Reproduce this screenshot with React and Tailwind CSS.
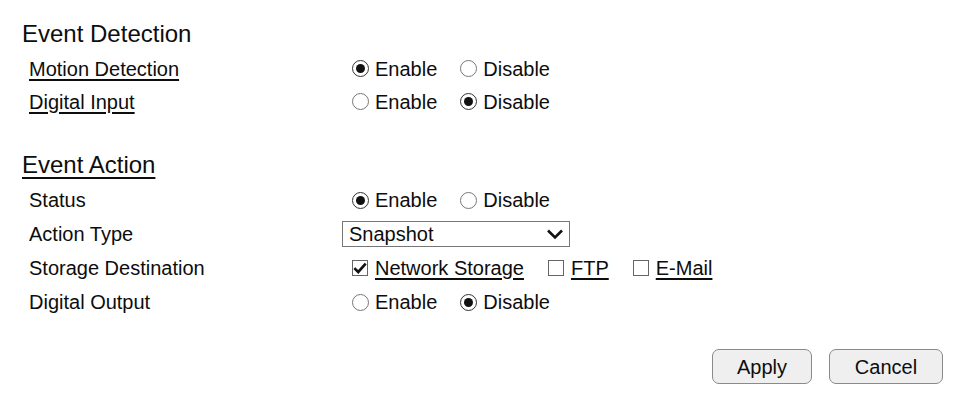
import React from "react";

const Radio = ({ checked, label }) => (
  <label className="flex items-center">
    <span className={"shrink-0 w-[17px] h-[17px] rounded-full bg-white flex items-center justify-center " + (checked ? "border-[1.5px] border-[#333]" : "border border-[#777]")}>
      {checked && <span className="w-[9px] h-[9px] rounded-full bg-[#111]" />}
    </span>
    <span className="ml-[6px]">{label}</span>
  </label>
);

const RadioPair = ({ enabled }) => (
  <div className="flex items-center ml-[10px] gap-[23px]">
    <Radio checked={enabled} label="Enable" />
    <Radio checked={!enabled} label="Disable" />
  </div>
);

const Check = ({ checked, label }) => (
  <label className="flex items-center">
    <span className="shrink-0 w-[16px] h-[16px] border border-[#666] bg-white flex items-center justify-center">
      {checked && (
        <svg viewBox="0 0 16 16" className="w-[15px] h-[15px]">
          <path d="M1.5 7.5 L6 12 L14.5 2.5" fill="none" stroke="#111" strokeWidth="3" />
        </svg>
      )}
    </span>
    <span className="ml-[7px] underline underline-offset-[3px]">{label}</span>
  </label>
);

const Row = ({ label, link, h = "h-[34px]", children }) => (
  <div className={"flex items-center " + h}>
    <div className={"shrink-0 w-[320px] pl-[7px] " + (link ? "underline underline-offset-[3px]" : "")}>
      <span>{label}</span>
    </div>
    <div className="flex items-center">{children}</div>
  </div>
);

export default function App() {
  return (
    <div className="w-[955px] h-[420px] bg-white text-[#0d0d0d] font-['Liberation_Sans',Arial,sans-serif] text-[20px] leading-none pl-[22px] pt-[19px]">
      <div className="h-[30px] flex items-center text-[24px]">Event Detection</div>
      <div className="mt-[3px]">
        <Row label="Motion Detection" link h="h-[33px]">
          <RadioPair enabled={true} />
        </Row>
        <Row label="Digital Input" link h="h-[33px]">
          <RadioPair enabled={false} />
        </Row>
      </div>

      <div className="mt-[32px] h-[30px] flex items-center text-[24px]">
        <span className="underline underline-offset-[4px]">Event Action</span>
      </div>
      <div className="mt-[3px]">
        <Row label="Status">
          <RadioPair enabled={true} />
        </Row>
        <Row label="Action Type">
          <div className="w-[228px] h-[26px] border border-[#767676] bg-white flex items-center justify-between pl-[6px] pr-[4px]">
            <span>Snapshot</span>
            <svg viewBox="0 0 20 20" className="w-[20px] h-[20px]">
              <path d="M3 6.5 L10 13.5 L17 6.5" fill="none" stroke="#111" strokeWidth="2.6" />
            </svg>
          </div>
        </Row>
        <Row label="Storage Destination">
          <div className="flex items-center ml-[10px] gap-[24px]">
            <Check checked={true} label="Network Storage" />
            <Check checked={false} label="FTP" />
            <Check checked={false} label="E-Mail" />
          </div>
        </Row>
        <Row label="Digital Output">
          <RadioPair enabled={false} />
        </Row>
      </div>

      <div className="flex justify-end gap-[17px] pr-[12px] mt-[30px]">
        <button className="w-[100px] h-[35px] rounded-[7px] border border-[#8a8a8a] bg-[#efefef]">Apply</button>
        <button className="w-[114px] h-[35px] rounded-[7px] border border-[#8a8a8a] bg-[#efefef]">Cancel</button>
      </div>
    </div>
  );
}
